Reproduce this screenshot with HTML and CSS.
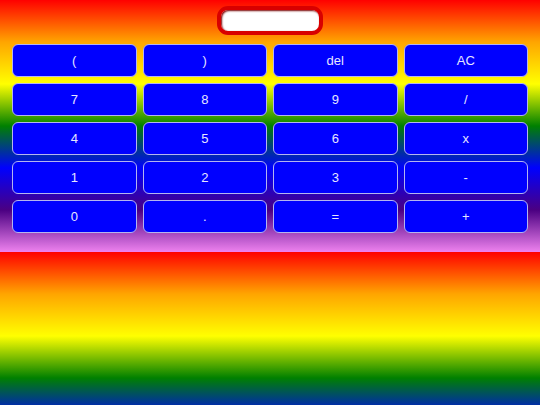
FILE: index.html
```html
<!DOCTYPE html>
<html>
<head>
<meta charset="utf-8">
<link rel="stylesheet" href="styles.css">
</head>
<body>
<div class="display"></div>
<div class="keys">
  <button class="key">(</button>
  <button class="key">)</button>
  <button class="key">del</button>
  <button class="key">AC</button>
  <button class="key">7</button>
  <button class="key">8</button>
  <button class="key">9</button>
  <button class="key">/</button>
  <button class="key">4</button>
  <button class="key">5</button>
  <button class="key">6</button>
  <button class="key">x</button>
  <button class="key">1</button>
  <button class="key">2</button>
  <button class="key">3</button>
  <button class="key">-</button>
  <button class="key">0</button>
  <button class="key">.</button>
  <button class="key">=</button>
  <button class="key">+</button>
</div>
</body>
</html>
```

FILE: styles.css
```css
html {
  height: 252px;
  background: linear-gradient(red, orange, yellow, green, blue, indigo, violet);
}
body {
  margin: 0;
  padding: 6px 12px 0 12px;
  font-family: "Liberation Sans", Arial, sans-serif;
}
.display {
  width: 98px;
  height: 21px;
  margin: 0 auto;
  background: #fff;
  border: 4px solid #d80000;
  border-radius: 11px;
  box-shadow: inset 1px 1px 2px #700;
}
.keys {
  margin-top: 9px;
  display: grid;
  grid-template-columns: repeat(4, 1fr);
  column-gap: 6px;
  row-gap: 6px;
}
.key {
  height: 33px;
  margin: 0;
  padding: 0;
  background: #0000ff;
  border: 1px solid #b4b4f0;
  border-radius: 6px;
  color: #e6e6ff;
  font-family: "Liberation Sans", Arial, sans-serif;
  font-size: 13px;
}
```
